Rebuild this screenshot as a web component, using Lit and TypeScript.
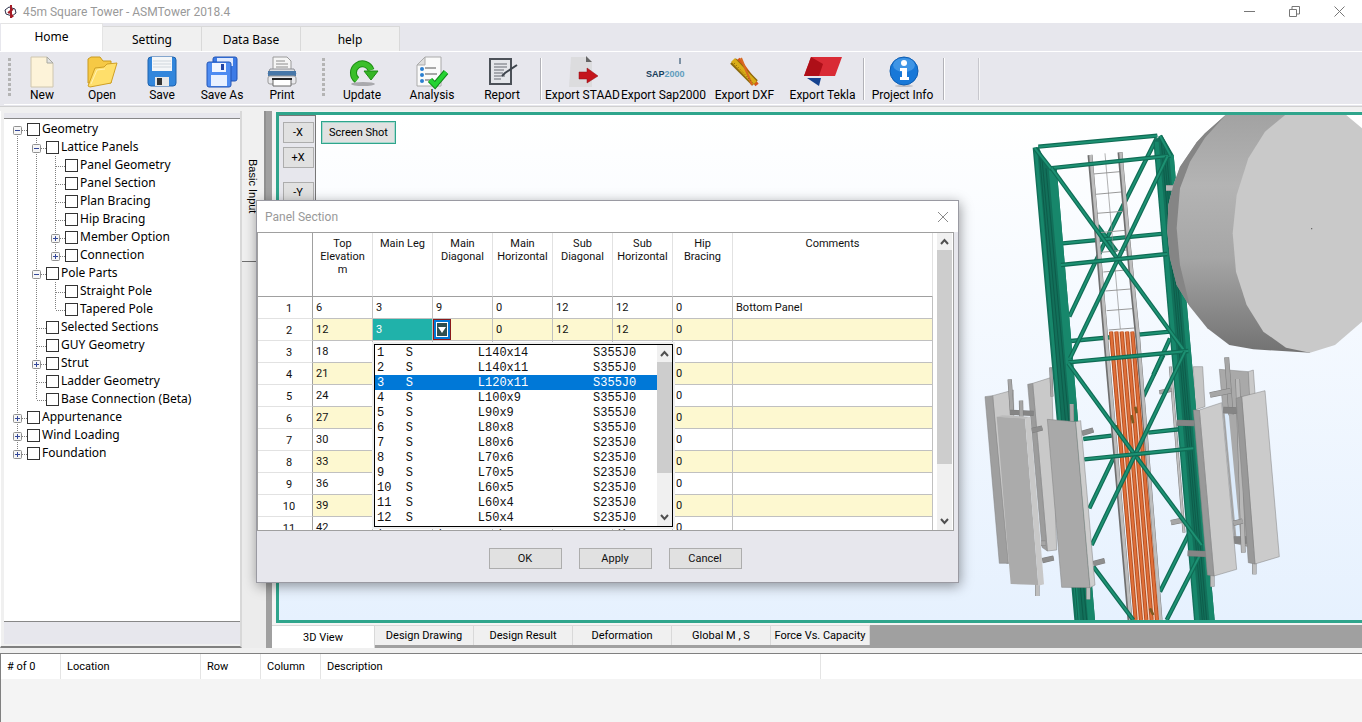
import { LitElement, html, css, svg, nothing } from "lit";
import { customElement } from "lit/decorators.js";
import { classMap } from "lit/directives/class-map.js";

type TreeRow = { label: string; guides: string; box?: "+" | "-" };

/* guides: one letter per column. "|" passes through, "T" branches, "L" ends, "F" starts, " " is blank */
const TREE: TreeRow[] = [
  { label: "Geometry", guides: "F", box: "-" },
  { label: "Lattice Panels", guides: "|T", box: "-" },
  { label: "Panel Geometry", guides: "||T" },
  { label: "Panel Section", guides: "||T" },
  { label: "Plan Bracing", guides: "||T" },
  { label: "Hip Bracing", guides: "||T" },
  { label: "Member Option", guides: "||T", box: "+" },
  { label: "Connection", guides: "||L", box: "+" },
  { label: "Pole Parts", guides: "|T", box: "-" },
  { label: "Straight Pole", guides: "||T" },
  { label: "Tapered Pole", guides: "||L" },
  { label: "Selected Sections", guides: "|T" },
  { label: "GUY Geometry", guides: "|T" },
  { label: "Strut", guides: "|T", box: "+" },
  { label: "Ladder Geometry", guides: "|T" },
  { label: "Base Connection (Beta)", guides: "|L" },
  { label: "Appurtenance", guides: "T", box: "+" },
  { label: "Wind Loading", guides: "T", box: "+" },
  { label: "Foundation", guides: "L", box: "+" },
];

const ICONS: Record<string, unknown> = {
  New: svg`<path d="M5 1h16l6 6v24H5z" fill="#fdf3d9" stroke="#cfc6ae"/><path d="M21 1v6h6z" fill="#e4e4e4" stroke="#a9a9a0"/>`,
  Open: svg`<path d="M2 27V3l3-2h9l3 4h8v22z" fill="#f6c945" stroke="#c99a1e"/><path d="M2 30 9 12l9-1 3-3 10-1-6 20-21 4z" fill="#ffdf6b" stroke="#d0a025"/><path d="M5 28l6-14 8-1" fill="none" stroke="#fff1b3"/>`,
  Save: svg`<rect x="2" y="1" width="28" height="29" rx="3" fill="#3286dc" stroke="#1e62ad"/><rect x="6" y="1" width="20" height="14" fill="#f4f6f8"/><path d="M7 5h18M7 8h18M7 11h18" stroke="#cfd6dc"/><rect x="9" y="21" width="14" height="9" fill="#e8e8e8"/><rect x="11" y="22" width="5" height="7" fill="#333"/>`,
  "Save As": svg`<rect x="7" y="1" width="24" height="24" rx="2" fill="#3d7be6" stroke="#2255b5"/><rect x="11" y="2" width="16" height="8" fill="#dfeaff"/><rect x="1" y="6" width="24" height="25" rx="2" fill="#4e8cf2" stroke="#2255b5"/><rect x="6" y="7" width="14" height="9" fill="#f2f6ff"/><rect x="15" y="8" width="3" height="6" fill="#2246a8"/><rect x="5" y="19" width="16" height="11" fill="#e9f1ff"/>`,
  Print: svg`<path d="M7 14V1h14l4 4v9z" fill="#f5f5f5" stroke="#9a9a9a"/><path d="M10 5h9M10 8h12M10 11h12" stroke="#8c8c8c"/><path d="M4 13h24l2 5H2z" fill="#dedfe2" stroke="#8d8f95"/><rect x="2" y="15" width="28" height="5" fill="#4777a8"/><rect x="2" y="20" width="28" height="8" rx="2" fill="#e9e9ec" stroke="#999"/><path d="M7 23h18v7H7z" fill="#fff" stroke="#666"/><path d="M6 23h20" stroke="#222" stroke-width="2"/>`,
  Update: svg`<ellipse cx="17" cy="28" rx="12" ry="2" fill="#a9a9ad"/><path d="M11 24A9 9 0 1 1 25 14" fill="none" stroke="#1d8c14" stroke-width="7"/><path d="M11 24A9 9 0 1 1 25 14" fill="none" stroke="#3bbf2a" stroke-width="5"/><path d="M18 15h14l-7 9z" fill="#35b526" stroke="#1d8c14"/>`,
  Analysis: svg`<path d="M9 1h16v29H1V9z" fill="#fafafa" stroke="#aaa"/><path d="M9 1v8H1z" fill="#ddd" stroke="#aaa"/><g fill="#2b7fd0"><circle cx="6" cy="13" r="2"/><circle cx="6" cy="19" r="2"/><circle cx="6" cy="25" r="2"/></g><path d="M9 12h11M9 18h12M9 24h7" stroke="#555"/><path d="m14 24 5 5 11-13" fill="none" stroke="#12861a" stroke-width="6"/><path d="m14 24 5 5 11-13" fill="none" stroke="#24d332" stroke-width="4"/>`,
  Report: svg`<rect x="4" y="3" width="21" height="25" fill="#e4e6ea" stroke="#4c5158" stroke-width="2"/><path d="M8 8h13M8 11h13M8 14h10M8 17h9M8 20h11M8 23h7" stroke="#666b72"/><path d="M31 9 19 17l-3 3" fill="none" stroke="#3e454d" stroke-width="2"/>`,
  "Export STAAD": svg`<path d="M4 1h15l6 5v25H2z" fill="#dcdcde"/><path d="M19 0v6h6z" fill="#666"/><path d="M12 16h8v-4l11 8-11 7v-4h-8z" fill="#c4151c" stroke="#8e1015" stroke-width=".5"/>`,
  "Export Sap2000": svg`<text x="-2" y="21" class="logo"><tspan class="dark">SAP</tspan><tspan class="pale">2000</tspan></text><path d="M32 2v6" stroke="#173d5c"/>`,
  "Export DXF": svg`<path d="m9 3 19 26" stroke="#d6581b" stroke-width="4"/><path d="m4 5 22 22" stroke="#8d6a0c" stroke-width="8"/><path d="m4 4 22 23" stroke="#d9ad18" stroke-width="5"/><path d="m12 2 11 27" stroke="#d86a22" stroke-width="2"/><path d="m5 7 20 21" stroke="#7b5a08" stroke-dasharray="1 2"/>`,
  "Export Tekla": svg`<path d="M4 1h31l-7 19H-3z" fill="#d92b35"/><path d="M4 1 16 8l-4 12H-3z" fill="#ae0f18"/><path d="M0 22h14l-2 8z" fill="#16438f"/>`,
  "Project Info": svg`<ellipse cx="17" cy="30" rx="9" ry="1" fill="#bcbcc2"/><circle cx="17" cy="15" r="14" fill="#1878d8" stroke="#0d5cb0"/><ellipse cx="17" cy="9" rx="11" ry="7" fill="#5aa8ef" opacity=".6"/><circle cx="17" cy="7" r="3" fill="#fff"/><path d="M13 12h7v9h2v3h-9v-3h2v-6h-2z" fill="#fff"/>`,
};

const GROUPS: [string, string][][] = [
  [["New", "s"], ["Open", "s"], ["Save", "s"], ["Save As", "s"], ["Print", "s"]],
  [["Update", "m"], ["Analysis", "m"], ["Report", "m"]],
  [["Export STAAD", "l"], ["Export Sap2000", "l"], ["Export DXF", "l"], ["Export Tekla", "x"]],
  [["Project Info", "x"]],
];

const HEADS = ["Top Elevation m", "Main Leg", "Main Diagonal", "Main Horizontal", "Sub Diagonal", "Sub Horizontal", "Hip Bracing", "Comments"];

const ROWS: string[][] = [
  ["6", "3", "9", "0", "12", "12", "0", "Bottom Panel"],
  ["12", "3", "", "0", "12", "12", "0", ""],
  ...["18", "21", "24", "27", "30", "33", "36", "39"].map((e) => [e, "", "", "", "", "", "0", ""]),
  ["42", "4", "4", "4", "", "12", "0", ""],
];

const PROFILES = [
  ["L140x14", "S355J0"], ["L140x11", "S355J0"], ["L120x11", "S355J0"], ["L100x9", "S355J0"],
  ["L90x9", "S355J0"], ["L80x8", "S355J0"], ["L80x6", "S235J0"], ["L70x6", "S235J0"],
  ["L70x5", "S235J0"], ["L60x5", "S235J0"], ["L60x4", "S235J0"], ["L50x4", "S235J0"],
];

const pad = (s: string, n: number) => s.padEnd(n, "\u00a0");

const chevron = (up: boolean) => html`<svg class="chev" viewBox="0 0 15 17" aria-hidden="true">
  <path d=${up ? "M4 11l3.500-4 3.500 4" : "M4 6l3.500 4 3.500-4"} fill="none" stroke="#505050" stroke-width="2" /></svg>`;

@customElement("tower-scene")
export class TowerScene extends LitElement {
  static styles = css`
    :host { display: block; height: 100%; }
    .scene { display: block; width: 100%; height: 100%; }
    .g { stroke: #0f6b54; stroke-width: 13; }
    .gh { stroke: #1d9173; stroke-width: 6; }
    .e { stroke: #808080; stroke-width: 1.500; }
  `;

  beam(x1: number, y1: number, x2: number, y2: number) {
    return svg`<line class="g" x1=${x1} y1=${y1} x2=${x2} y2=${y2} /><line class="gh" x1=${x1} y1=${y1} x2=${x2} y2=${y2} />`;
  }

  bar(x1: number, y1: number, x2: number, y2: number, w = 13, c = "#a6a6a6") {
    return svg`<line x1=${x1} y1=${y1} x2=${x2} y2=${y2} stroke="#7c7c7c" stroke-width=${w} />
      <line x1=${x1} y1=${y1} x2=${x2} y2=${y2} stroke=${c} stroke-width=${w - 3} />`;
  }

  render() {
    const back = [[235, 125, 592, 92], [590, 100, 440, 400], [440, 400, 328, 635], [412, 362, 470, 440],
      [308, 415, 620, 385], [333, 708, 630, 680], [610, 750, 550, 875], [460, 1060, 388, 1210],
      [370, 1002, 455, 992], [565, 983, 665, 972], [690, 1280, 600, 1460], [630, 700, 580, 810]];
    const front = [[268, 190, 632, 152], [225, 130, 272, 190], [600, 92, 632, 152], [275, 190, 675, 740],
      [622, 155, 475, 460], [475, 460, 330, 760], [303, 480, 622, 447], [325, 772, 685, 738],
      [325, 775, 525, 1050], [525, 1050, 725, 1320], [675, 740, 525, 1050], [525, 1050, 395, 1320],
      [373, 1063, 700, 1030], [400, 1385, 520, 1545], [720, 1350, 620, 1545]];
    const rungs = [[400, 207, 480, 200], [406, 268, 484, 261], [410, 325, 488, 319], [418, 383, 495, 376],
      [422, 442, 500, 435], [430, 501, 510, 494], [436, 558, 512, 552], [440, 617, 518, 611], [446, 675, 524, 669]];
    const pipes = [0, 1, 2, 3, 4];
    return html`<svg class="scene" viewBox="279 115 1083 505" preserveAspectRatio="xMaxYMin slice" role="img" aria-label="Square lattice tower model">
      <defs>
        <linearGradient id="rim" x1="0" y1="0" x2="0" y2="1">
          <stop offset="0" stop-color="#a2a2a2" /><stop offset=".3" stop-color="#b4b4b4" />
          <stop offset=".6" stop-color="#a6a6a6" /><stop offset="1" stop-color="#727272" />
        </linearGradient>
      </defs>
      <g transform="translate(960 105) scale(.333333)">
        <g transform="translate(0 735)">
          <path d="M218 100 275 82 290 600 262 603z" fill="#c9c9c9" class="e" /><path d="M203 103 218 100 262 603 246 592z" fill="#9c9c9c" class="e" />
          ${this.bar(272, 52, 276, 140, 9)}
          <path d="M98 137 160 120 170 640 140 640z" fill="#c9c9c9" class="e" /><path d="M75 140 98 137 145 640 118 640z" fill="#9f9f9f" class="e" />
          ${this.bar(149, 88, 156, 190)}${this.bar(150, 187, 221, 190, 16, "#858585")}${this.bar(183, 152, 184, 204)}
          ${this.bar(243, 580, 257, 580, 16)}
          ${this.bar(215, 242, 247, 234, 16, "#8e8e8e")}${this.bar(247, 632, 281, 624, 16, "#8e8e8e")}
          <path d="M700 50 728 50 735 170 705 180z" fill="#c6c6c6" class="e" />
          ${this.bar(631, 50, 672, 548, 9, "#c0c0c0")}${this.bar(598, 127, 635, 119)}${this.bar(633, 518, 665, 511, 16)}
        </g>
        ${back.map((b) => this.beam(b[0], b[1], b[2], b[3]))}
        <path d="M218 128 236 126 265 190 290 190 405 1545 343 1545z" fill="#12705a" />
        <path d="M266 190 290 190 405 1545 384 1545z" fill="#17876b" />
        <path d="M222 128 231 128 360 1545 350 1545z" fill="#17876b" />
        <path d="M245 150 370 1545M258 190 380 1545M238 140 354 1545" stroke="#0b5343" stroke-width="2" fill="none" />
        <path d="M580 108 606 90 641 150 764 1545 702 1545z" fill="#12705a" />
        <path d="M628 150 641 150 764 1545 748 1545z" fill="#17876b" />
        <path d="M584 110 596 110 718 1545 706 1545z" fill="#17876b" />
        <path d="M604 110 727 1545M620 150 740 1545M612 130 733 1545" stroke="#0b5343" stroke-width="2" fill="none" />
        ${this.bar(618, 249, 640, 249, 18, "#b5b5b5")}
        ${rungs.map((r) => svg`<line x1=${r[0]} y1=${r[1]} x2=${r[2]} y2=${r[3]} stroke="#999" stroke-width="3" />`)}
        <path d="M435 145 481 672" stroke="#8b8b8b" stroke-width="2" />
        <path d="M390 150 418 470 440 735 510 1545M480 142 503 400 533 700 600 1545" fill="none" stroke="#6f6f6f" stroke-width="15" />
        <path d="M392 150 420 470 442 735 512 1545M482 142 505 400 535 700 602 1545" fill="none" stroke="#bdbdbd" stroke-width="9" />
        <path d="M447 680H524L598 1545H522z" fill="#f3d3c2" />
        ${pipes.map((i) => svg`<line x1=${453 + i * 16} y1="680" x2=${527 + i * 16} y2="1545" stroke="#b04a1c" stroke-width="12" />
          <line x1=${453 + i * 16} y1="680" x2=${527 + i * 16} y2="1545" stroke="#e0703a" stroke-width="7" />`)}
        <path d="M470 960l6 30M515 930l4 25M526 905l4 20M570 1510l10 20" stroke="#7b5a22" stroke-width="8" />
        ${front.map((b) => this.beam(b[0], b[1], b[2], b[3]))}
        <path d="M800 27 735 85 710 112 660 185 640 240 625 300 622 380 630 460 650 540 690 605 742 670 808 720 880 733 1050 743V27z" fill="url(#rim)" />
        <path d="M800 27 735 85 710 112 660 185 640 240 625 300 622 380 630 460 650 540 690 605 660 480 650 370 660 250 690 170 735 98z" fill="#858585" />
        <path d="M979 27 915 80 865 160 830 270 818 385 828 500 860 600 910 680 978 728 1050 743 1125 720 1206 650V70L1155 27z" fill="#c9c9c9" />
        <circle cx="1055" cy="371" r="2" fill="#555" />
        <g transform="translate(0 735)">
          ${this.bar(335, 162, 336, 214)}${this.bar(366, 250, 400, 240, 16, "#8e8e8e")}${this.bar(400, 641, 434, 632, 16, "#8e8e8e")}
          ${this.bar(385, 705, 385, 748, 13, "#bdbdbd")}${this.bar(232, 695, 232, 738, 13, "#bdbdbd")}
          <path d="M110 200 195 205 235 705 152 702z" fill="#ababab" /><path d="M195 205 211 200 252 703 235 707z" fill="#c8c8c8" />
          <path d="M110 200 127 196 211 200 195 206z" fill="#bcbcbc" />
          <path d="M262 208 347 215 390 713 305 712z" fill="#a9a9a9" class="e" /><path d="M347 215 362 212 405 705 390 713z" fill="#cdcdcd" class="e" />
          ${this.bar(650, 218, 703, 220, 18, "#858585")}${this.bar(683, 610, 738, 612, 18, "#858585")}
          <path d="M778 58 865 65 905 600 825 580z" fill="#a9a9a9" class="e" /><path d="M865 65 880 60 890 200 872 200z" fill="#c9c9c9" class="e" />
          <path d="M800 190 835 560" stroke="#dcebfb" stroke-width="12" />
          ${this.bar(800, 22, 813, 195, 15)}${this.bar(790, 180, 830, 182, 20, "#858585")}${this.bar(820, 570, 866, 570, 22, "#858585")}
          ${this.bar(833, 87, 850, 608, 14, "#b8b8b8")}${this.bar(750, 135, 812, 122, 17)}${this.bar(820, 520, 848, 513, 16)}
          ${this.bar(883, 630, 883, 673, 13, "#bdbdbd")}${this.bar(757, 668, 757, 710, 13, "#bdbdbd")}
          <path d="M845 140 915 122 958 620 885 642z" fill="#cbcbcb" class="e" /><path d="M828 145 845 140 885 642 865 638z" fill="#999" class="e" />
          <path d="M718 180 785 158 830 658 762 678z" fill="#cbcbcb" class="e" /><path d="M700 180 718 180 762 678 742 675z" fill="#999" class="e" />
        </g>
      </g>
    </svg>`;
  }
}

@customElement("section-dialog")
export class SectionDialog extends LitElement {
  static styles = css`
    :host { display: block; box-sizing: border-box; width: 703px; border: 1px solid #9a9aa2; background: #e7e7ed; color: #111;
      font-family: Roboto, "Liberation Sans", sans-serif; font-size: 11px; box-shadow: 1px 3px 12px rgba(0, 0, 0, .4); }
    .title { display: flex; align-items: center; justify-content: space-between; height: 31px; padding: 0 8px; background: #fff;
      color: #999; font-family: Roboto, sans-serif; font-size: 12px; }
    .close { width: 14px; height: 14px; padding: 0; border: 0; background: none; }
    .close svg { display: block; width: 14px; height: 14px; }
    .sheet { display: flex; justify-content: space-between; height: 297px; margin-right: 4px; padding-right: 1px; overflow: hidden;
      border: 1px solid #a0a0a0; background: #fff; }
    table { width: 675px; table-layout: fixed; border-spacing: 0; }
    th, td { box-sizing: border-box; padding: 0 3px; border-right: 1px solid #c0c0c0; border-bottom: 1px solid #c0c0c0; text-align: left; font-weight: 400; line-height: 13px; }
    tr { height: 22px; }
    .heads { height: 64px; }
    .heads th { padding: 4px 3px; vertical-align: top; text-align: center; border-right-color: #e2e2e2; border-bottom-color: #a0a0a0; }
    .heads .num, .num { width: 55px; border-right-color: #a0a0a0; }
    .num { padding: 2px 0 0 8px; text-align: center; border-bottom-color: #e2e2e2; }
    .col { width: 60px; }
    .note { width: 200px; }
    .odd td { background: #fdf8d0; }
    .odd .active { position: relative; background: #20b2aa; color: #fff; }
    .odd .host { padding: 0; }
    .arrow { display: block; box-sizing: border-box; width: 18px; height: 21px; padding: 2px; border: 1px solid #8b1a1a; background: #0078d7; }
    .arrow svg { display: block; width: 12px; height: 15px; }
    .menu { position: absolute; z-index: 2; left: 1px; top: 25px; display: flex; box-sizing: border-box; width: 299px; height: 183px; border: 1px solid #000;
      background: #fff; box-shadow: 0 0 0 2px #f0f0f0; }
    select { flex: 1; min-width: 0; height: 181px; padding: 0; border: 0; outline: 0; border-radius: 0; background: #fff; color: #111;
      font-family: "Liberation Mono", "Courier New", monospace; font-size: 12px; scrollbar-width: none; overflow: hidden; }
    option { box-sizing: border-box; height: 15px; min-height: 15px; padding: 1px 2px 0; line-height: 14px; }
    option:checked { background: #0078d7 linear-gradient(#0078d7, #0078d7); color: #fff; }
    .scroll { display: flex; flex-direction: column; flex: none; width: 15px; background: #f0f0f0; }
    .chev { display: block; flex: none; width: 15px; height: 17px; }
    .track { flex: 1; }
    .thumb { background: #cdcdcd; }
    .thumb.long { height: 214px; }
    .thumb.short { height: 111px; }
    .actions { display: flex; justify-content: center; gap: 17px; padding: 17px 38px 13px 53px; }
    .actions button { box-sizing: border-box; width: 73px; height: 21px; padding: 0; border: 1px solid #adadad; background: #e1e1e1; color: #111; font: inherit; }
  `;

  scroll(size: string) {
    return html`<div class="scroll">${chevron(true)}<div class="track"><div class="thumb ${size}"></div></div>${chevron(false)}</div>`;
  }

  menu() {
    return html`<div class="menu">
      <select size="12" aria-label="Main leg section">
        ${PROFILES.map((p, i) => html`<option ?selected=${i === 2}>${pad(String(i + 1), 4)}${pad("S", 10)}${pad(p[0], 16)}${p[1]}</option>`)}
      </select>
      ${this.scroll("short")}
    </div>`;
  }

  cell(text: string, row: number, col: number) {
    if (row === 1 && col === 1) return html`<td class="active">${text}${this.menu()}</td>`;
    if (row === 1 && col === 2)
      return html`<td class="host"><button class="arrow" aria-label="Open list"><svg viewBox="0 0 12 15">
        <rect x=".5" y=".5" width="11" height="14" fill="#2f4f4f" stroke="#fff" /><path d="M2 5h8l-4 6z" fill="#fff" /></svg></button></td>`;
    return html`<td>${text}</td>`;
  }

  render() {
    return html`
      <div class="title"><span>Panel Section</span>
        <button class="close" aria-label="Close"><svg viewBox="0 0 14 14"><path d="M2 2l10 10M12 2 2 12" stroke="#8a8a8a" /></svg></button></div>
      <div class="sheet">
        <table>
          <thead><tr class="heads"><th class="num"></th>
            ${HEADS.map((h) => html`<th class=${h === "Comments" ? "note" : "col"}>${h}</th>`)}</tr></thead>
          <tbody>${ROWS.map((r, i) => html`<tr class=${classMap({ odd: i % 2 === 1 })}><th class="num">${i + 1}</th>${r.map((c, j) => this.cell(c, i, j))}</tr>`)}</tbody>
        </table>
        ${this.scroll("long")}
      </div>
      <div class="actions"><button>OK</button><button>Apply</button><button>Cancel</button></div>`;
  }
}

@customElement("app-root")
export class AppRoot extends LitElement {
  static styles = css`
    :host { display: flex; flex-direction: column; position: relative; box-sizing: border-box; height: 100vh; min-height: 600px; overflow: hidden;
      background: #f0f0f0; color: #000; font-family: "Noto Sans", sans-serif; font-size: 12px; }
    button { font: inherit; color: inherit; padding: 0; }
    .title { display: flex; align-items: center; height: 23px; padding-left: 4px; background: #fff; color: #999; font-family: Roboto, sans-serif; }
    .app { width: 13px; height: 13px; margin-right: 6px; }
    .grow { flex: 1; }
    .win { width: 45px; height: 22px; border: 0; background: none; }
    .win svg { display: block; width: 12px; height: 12px; margin: 0 auto; }
    .tabs { display: flex; align-items: flex-end; height: 28px; padding-left: 1px; background: #e7e7ed; border-bottom: 1px solid #fff; }
    .tab { box-sizing: border-box; width: 99px; height: 25px; border: 1px solid #d9d9d9; border-left: 0; border-bottom: 0; background: #f0f0f0; }
    .tab.on { width: 102px; height: 28px; padding-bottom: 3px; background: #fff; border-color: #e4e4e4; }
    .tools { display: flex; align-items: stretch; height: 52px; margin: 0 0 1px 4px; padding: 0 4px; border-bottom: 1px solid #fff; background: #e7e7ed; }
    .bar { border-bottom: 1px solid #d0d0d0; background: #e7e7ed; }
    .grip { width: 3px; height: 38px; margin: 6px 1px 0 0; background: repeating-linear-gradient(#b4b4b4 0 3px, transparent 3px 5px); }
    .grip.far { margin: 6px 2px 0 10px; }
    .sep { width: 1px; height: 42px; margin: 6px 0 0 3px; background: #b2b2b8; border-right: 1px solid #fff; }
    .sep.end { margin-left: 33px; opacity: .6; }
    .tool { display: flex; flex-direction: column; align-items: center; border: 0; background: none; white-space: nowrap; padding-top: 4px; font-family: Roboto, sans-serif; line-height: 14px; }
    .tool svg { display: block; width: 32px; height: 32px; overflow: visible; }
    .tool.s { width: 60px; } .tool.m { width: 70px; } .tool.l { width: 81px; } .tool.x { width: 75px; }
    .logo { font-family: "Liberation Sans", sans-serif; font-size: 9px; font-weight: 700; }
    .dark { fill: #173d5c; } .pale { fill: #5f9cbd; }
    .main { flex: 1; min-height: 0; display: flex; padding-top: 4px; }
    .side { display: flex; flex-direction: column; box-sizing: border-box; width: 242px; padding: 2px 0 2px 3px; border: 0 solid #808080; border-left: 1px solid #fff; border-right: 2px solid #d8d8d8; border-bottom-width: 2px; }
    .cap { height: 5px; background: #e7e7ed; border-bottom: 1px solid #888; }
    .foot { height: 22px; background: #e7e7ed; border-top: 1px solid #888; }
    .tree { flex: 1; margin: 0; padding: 1px 0 0 4px; list-style: none; background: #fff; overflow: hidden; }
    .node { display: flex; align-items: center; height: 18px; }
    .guide { width: 19px; height: 18px; flex: none; }
    .node label { display: flex; align-items: center; gap: 2px; line-height: 18px; }
    .node input { appearance: none; box-sizing: border-box; width: 13px; height: 13px; margin: 0; border: 1px solid #333; background: #fff; }
    .rail { display: flex; flex-direction: column; width: 24px; }
    .vtab { width: 24px; height: 150px; border: 0; border-right: 2px solid #909090; background: #f0f0f0; writing-mode: vertical-rl; font-family: "Liberation Sans", sans-serif; font-size: 11px; }
    .rest { flex: 1; border-top: 1px solid #707070; background: #ececec; }
    .split { width: 6px; background: #a0a0a0; }
    .work { flex: 1; min-width: 0; display: flex; flex-direction: column; background: #a0a0a0; }
    .pad { display: flex; flex: 1; min-height: 0; padding: 1px 0 0 4px; background: #f4f4f4; }
    .frame { flex: 1; min-height: 0; display: flex; margin-bottom: 2px; border: 3px solid #2fa58c; border-right: 0; outline: 1px solid #f4f4f4; background: linear-gradient(#fff, #f6faff 35%, #e6f1fe); }
    .axes { display: flex; flex-direction: column; align-items: center; align-self: flex-start; gap: 4px; box-sizing: border-box; width: 37px; padding: 6px 0 100px 2px; background: #e7e7ed; border-right: 1px solid #777; border-top: 1px solid #777; }
    .push { box-sizing: border-box; width: 31px; height: 21px; border: 1px solid #adadad; background: #e1e1e1; font-family: Roboto, sans-serif; font-size: 11px; }
    .push.next { margin-top: 10px; }
    .push.shot { flex: none; width: 75px; height: 23px; margin: 6px 0 0 5px; border-color: #2fa58c; outline: 1px solid #a8d8ce; outline-offset: -2px; }
    .scene { flex: 1; min-width: 0; margin-left: -117px; pointer-events: none; }
    .views { display: flex; align-items: flex-start; height: 23px; font-family: Roboto, sans-serif; }
    .view { box-sizing: border-box; width: 99px; height: 20px; border: 1px solid #d9d9d9; border-width: 1px 1px 0 0; background: #f0f0f0; font-size: 11px; white-space: nowrap; }
    .view.on { width: 103px; height: 23px; background: #fff; }
    .log { height: 68px; margin-top: 5px; border-top: 1px solid #808080; border-left: 1px solid #808080; background: #f4f4f4; }
    .log table { width: 100%; border-spacing: 0; table-layout: fixed; background: #fff; font-family: Roboto, sans-serif; font-size: 11px; }
    .log th { box-sizing: border-box; height: 25px; padding: 0 6px; text-align: left; font-weight: 400; border-right: 1px solid #e4e4e4; }
    .log .last { border-right: 0; }
    .c60 { width: 60px; } .c140 { width: 140px; } .c500 { width: 500px; }
    section-dialog { position: absolute; left: 256px; top: 200px; z-index: 3; }
  `;

  guide(kind: string, box?: string) {
    const v = kind === "|" || kind === "T" ? "M9.500 0V18" : kind === "L" ? "M9.500 0V10" : kind === "F" ? "M9.500 10V18" : "";
    const h = kind === "|" || kind === " " ? "" : "M10 10.500H19";
    return html`<svg class="guide" viewBox="0 0 19 18" aria-hidden="true">
      <path d=${v + h} stroke="#808080" stroke-dasharray="1 1" />
      ${box ? svg`<rect x="5.500" y="6.500" width="8" height="8" rx="1" fill="#f6f6f6" stroke="#919191" /><path d=${box === "+" ? "M7 10.500h5M9.500 8v5" : "M7 10.500h5"} stroke="#33479a" />` : nothing}
    </svg>`;
  }

  node(n: TreeRow) {
    const cols = [...n.guides];
    return html`<li class="node">${cols.map((g, i) => this.guide(g, i === cols.length - 1 ? n.box : undefined))}
      <label><input type="checkbox" />${n.label}</label></li>`;
  }

  render() {
    return html`
      <header class="title">
        <svg class="app" viewBox="0 0 13 13"><path d="M1 5l4-3 6 2 1 4-4 3-6-2z" fill="none" stroke="#2d2f4a" /><path d="M7 0v13M5 6l4 6M9 4 4 8" stroke="#a51c26" stroke-width="2" /></svg>
        <span>45m Square Tower - ASMTower 2018.4</span><span class="grow"></span>
        <button class="win" aria-label="Minimize"><svg viewBox="0 0 12 12"><path d="M0 5.500h11" stroke="#777" /></svg></button>
        <button class="win" aria-label="Restore"><svg viewBox="0 0 12 12"><path d="M.5 3.500h7v7h-7zM3 3V.5h7.500V8H8" fill="none" stroke="#777" /></svg></button>
        <button class="win" aria-label="Close"><svg viewBox="0 0 12 12"><path d="M.5.5l10 10M10.500.5l-10 10" stroke="#777" /></svg></button>
      </header>
      <nav class="tabs">${["Home", "Setting", "Data Base", "help"].map((t, i) => html`<button class=${classMap({ tab: true, on: i === 0 })}>${t}</button>`)}</nav>
      <div class="bar"><div class="tools">
        ${GROUPS.map((g, i) => html`${i < 2 ? html`<span class=${classMap({ grip: true, far: i === 1 })}></span>` : html`<span class="sep"></span>`}
          ${g.map(([t, size]) => html`<button class="tool ${size}"><svg viewBox="0 0 32 32">${ICONS[t]}</svg>${t}</button>`)}`)}
        <span class="sep"></span><span class="sep end"></span>
      </div></div>
      <main class="main">
        <aside class="side"><div class="cap"></div><ul class="tree">${TREE.map((n) => this.node(n))}</ul><div class="foot"></div></aside>
        <div class="rail"><button class="vtab">Basic Input</button><div class="rest"></div></div>
        <div class="split"></div>
        <section class="work">
          <div class="pad"><div class="frame">
            <div class="axes"><button class="push">-X</button><button class="push">+X</button><button class="push next">-Y</button></div>
            <button class="push shot">Screen Shot</button>
            <tower-scene class="scene"></tower-scene>
          </div></div>
          <nav class="views">${["3D View", "Design Drawing", "Design Result", "Deformation", "Global M , S", "Force Vs. Capacity"].map((t, i) => html`<button class=${classMap({ view: true, on: i === 0 })}>${t}</button>`)}</nav>
        </section>
      </main>
      <section class="log"><table><thead><tr>
        <th class="c60"># of 0</th><th class="c140">Location</th><th class="c60">Row</th><th class="c60">Column</th><th class="c500">Description</th><th class="last"></th>
      </tr></thead></table></section>
      <section-dialog></section-dialog>`;
  }
}
